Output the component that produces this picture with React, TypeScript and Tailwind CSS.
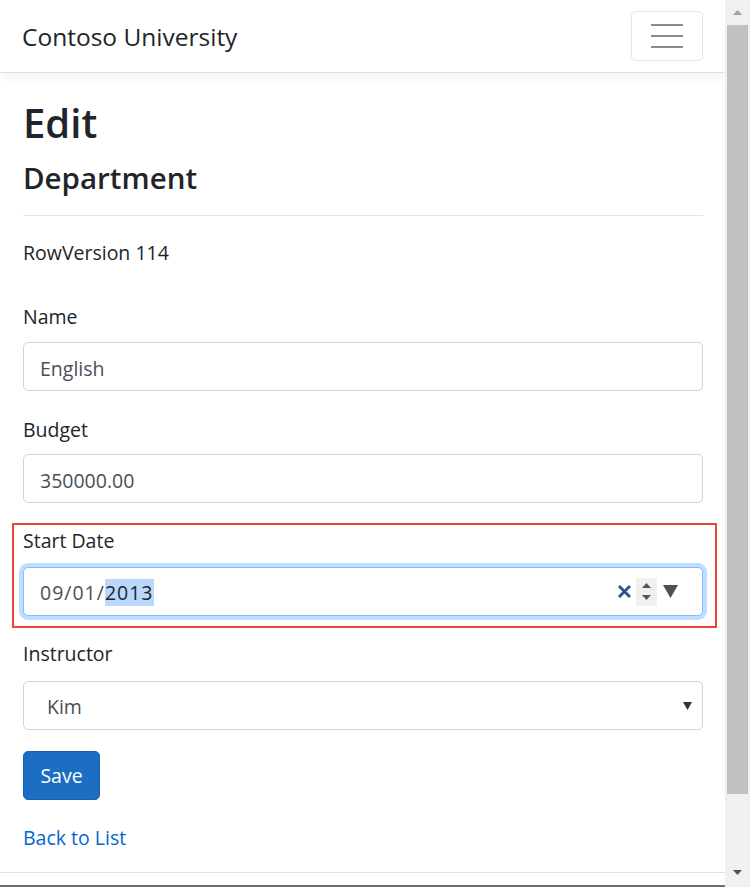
const LABEL = "block text-[19.5px] leading-[29px] text-[#212529]";
const CONTROL =
  "block h-[49px] w-full rounded-[5px] border border-[#ced4da] bg-white px-4 pt-[3px] text-[19.5px] text-[#495057] outline-none";

function Hamburger() {
  return (
    <button
      type="button"
      aria-label="Toggle navigation"
      className="flex h-[50px] w-[72px] flex-col items-center justify-center gap-[9px] rounded-[5px] border border-[#e3e3e3]"
    >
      <span className="block h-[2px] w-[32px] bg-[#8a8a8a]" />
      <span className="block h-[2px] w-[32px] bg-[#8a8a8a]" />
      <span className="block h-[2px] w-[32px] bg-[#8a8a8a]" />
    </button>
  );
}

function DateField() {
  return (
    <div className="mt-[12px] flex h-[49px] w-full items-center rounded-[5px] border border-[#80bdff] bg-white pl-4 pr-[24px] text-[19.5px] text-[#495057] shadow-[0_0_0_4px_rgba(0,123,255,0.25)]">
      <span className="pt-[2px] tracking-[1px]">
        09/01/<span className="bg-[#b9d8fc] text-[#212529]">2013</span>
      </span>
      <svg className="ml-auto" width="15" height="15" viewBox="0 0 15 15" aria-hidden>
        <path d="M2 2 L13 13 M13 2 L2 13" stroke="#2f5596" strokeWidth="3" />
      </svg>
      <div className="ml-[4px] flex h-[28px] w-[21px] flex-col items-center justify-center gap-[7px] bg-[#f0f0f0]">
        <svg width="9" height="5" viewBox="0 0 9 5" aria-hidden>
          <path d="M4.5 0 L9 5 L0 5 Z" fill="#555" />
        </svg>
        <svg width="9" height="5" viewBox="0 0 9 5" aria-hidden>
          <path d="M0 0 L9 0 L4.5 5 Z" fill="#555" />
        </svg>
      </div>
      <svg className="ml-[6px]" width="15" height="13" viewBox="0 0 15 13" aria-hidden>
        <path d="M0 0 L15 0 L7.5 13 Z" fill="#505050" />
      </svg>
    </div>
  );
}

function SelectField() {
  return (
    <div className="mt-[13px] flex h-[49px] w-full items-center rounded-[5px] border border-[#ced4da] bg-white pl-[23px] pr-[10px] text-[19.5px] text-[#495057]">
      <span className="pt-[2px]">Kim</span>
      <svg className="ml-auto" width="9" height="9" viewBox="0 0 9 9" aria-hidden>
        <path d="M0 1 L9 1 L4.5 9 Z" fill="#333" />
      </svg>
    </div>
  );
}

function Scrollbar() {
  return (
    <div className="flex h-full w-[25px] shrink-0 flex-col bg-[#f0f0f0]">
      <div className="flex h-[25px] items-center justify-center">
        <svg width="9" height="5" viewBox="0 0 9 5" aria-hidden>
          <path d="M4.5 0 L9 5 L0 5 Z" fill="#a3a3a3" />
        </svg>
      </div>
      <div className="mx-[2px] h-[769px] bg-[#c1c1c1]" />
      <div className="flex flex-1 items-end justify-center pb-[12px]">
        <svg width="9" height="5" viewBox="0 0 9 5" aria-hidden>
          <path d="M0 0 L9 0 L4.5 5 Z" fill="#505050" />
        </svg>
      </div>
    </div>
  );
}

export default function App() {
  return (
    <div className="flex h-[887px] w-[750px] overflow-hidden bg-white font-['Open_Sans',sans-serif]">
      <div className="flex min-w-0 flex-1 flex-col">
        <nav className="flex h-[73px] shrink-0 items-center justify-between border-b border-[#dee2e6] pl-[22px] pr-[22px] shadow-[0_4px_10px_rgba(0,0,0,0.05)]">
          <a className="pt-[3px] text-[24.5px] text-[#212529]">Contoso University</a>
          <Hamburger />
        </nav>

        <main className="shrink-0 px-[23px] pr-[22px]">
          <h1 className="mt-[26px] text-[40px] font-semibold leading-[47px] text-[#212529]">Edit</h1>
          <h4 className="mt-[14px] text-[29.5px] font-semibold leading-[35px] text-[#212529]">
            Department
          </h4>
          <hr className="mt-[20px] border-0 border-t border-[#e5e5e5]" />
          <p className="mt-[22px] text-[19.5px] leading-[29px] text-[#212529]">RowVersion 114</p>

          <label className={`${LABEL} mt-[35px]`}>Name</label>
          <input readOnly defaultValue="English" className={`${CONTROL} mt-[11px]`} />

          <label className={`${LABEL} mt-[24px]`}>Budget</label>
          <input readOnly defaultValue="350000.00" className={`${CONTROL} mt-[10px]`} />

          <div className="-ml-[11px] -mr-[14px] mt-[20px] border-2 border-[#e5473f] pb-[10px] pl-[9px] pr-[12px] pt-[1px]">
            <label className={LABEL}>Start Date</label>
            <DateField />
          </div>

          <label className={`${LABEL} mt-[11px]`}>Instructor</label>
          <SelectField />

          <button
            type="button"
            className="mt-[21px] block h-[49px] w-[77px] rounded-[5px] border border-[#1861ac] bg-[#1b6ec2] text-[19.5px] text-white"
          >
            Save
          </button>

          <a className="mt-[23px] block w-fit text-[19.5px] leading-[29px] text-[#0366d6]">Back to List</a>
        </main>

        <footer className="mt-[20px] flex h-[15px] shrink-0 flex-col justify-end border-t border-[#dee2e6]">
          <div className="h-[2px] bg-[#6e6e6e]" />
        </footer>
      </div>
      <Scrollbar />
    </div>
  );
}
